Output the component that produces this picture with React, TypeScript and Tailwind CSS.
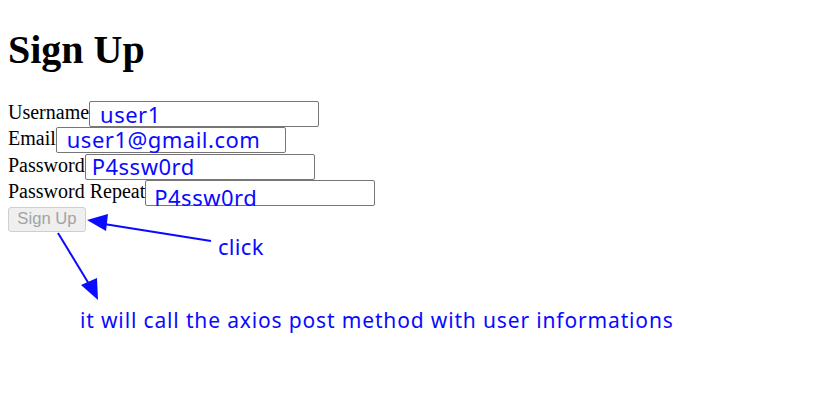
import React from "react";

// labels are plain Times, the filled values and notes are hand drawn in blue on top
const rows = [
  { label: "Username", value: "user1", text: "left-[10px] top-[1px]", row: "" },
  { label: "Email", value: "user1@gmail.com", text: "left-[10px] top-0", row: "" },
  { label: "Password", value: "P4ssw0rd", text: "left-[6px] top-0", row: "mt-px" },
  { label: "Password Repeat", value: "P4ssw0rd", text: "left-[8px] top-[5px]", row: "" },
];

const note = "font-['Noto_Sans',sans-serif] text-[#0a0aff] whitespace-nowrap";

function FakeInput({ value, text }: { value: string; text: string }) {
  return (
    <div className="relative w-[230px] h-[26px] shrink-0 border border-[#767676] rounded-[2px] bg-white">
      <span className={`absolute ${text} text-[22px] leading-[22px] tracking-[0.5px] ${note}`}>{value}</span>
    </div>
  );
}

function Arrows() {
  return (
    <svg className="absolute inset-0 pointer-events-none" width="816" height="407" viewBox="0 0 816 407">
      <line x1="211" y1="241" x2="104" y2="224" stroke="#0a0aff" strokeWidth="2" />
      <polygon points="87,220 108,214 106,231" fill="#0a0aff" />
      <line x1="58" y1="233" x2="89" y2="284" stroke="#0a0aff" strokeWidth="2" />
      <polygon points="98,300 81,285 97,278" fill="#0a0aff" />
    </svg>
  );
}

export default function App() {
  return (
    <div className="relative w-[816px] h-[407px] bg-white p-2 font-['Liberation_Serif',serif] text-black overflow-hidden">
      <h1 className="mt-[19px] text-[40px] leading-[46px] font-bold">Sign Up</h1>

      <div className="mt-[28px] flex flex-col">
        {rows.map((r) => (
          <div key={r.label} className={`flex items-start h-[26px] ${r.row}`}>
            <span className="text-[20px] leading-[22px] whitespace-nowrap">{r.label}</span>
            <FakeInput value={r.value} text={r.text} />
          </div>
        ))}
        <div className="mt-px">
          <button
            disabled
            className="w-[78px] h-[25px] border border-[#cfcfcf] rounded-[3px] bg-[#efefef] text-[#a3a3a3] text-[16.67px] leading-none font-['Liberation_Sans',sans-serif]"
          >
            Sign Up
          </button>
        </div>
      </div>

      <span className={`absolute left-[218px] top-[232px] text-[22px] leading-[28px] tracking-[0.3px] ${note}`}>click</span>
      <span className={`absolute left-[80px] top-[306px] text-[21px] leading-[28px] tracking-[0.85px] ${note}`}>
        it will call the axios post method with user informations
      </span>

      <Arrows />
    </div>
  );
}
